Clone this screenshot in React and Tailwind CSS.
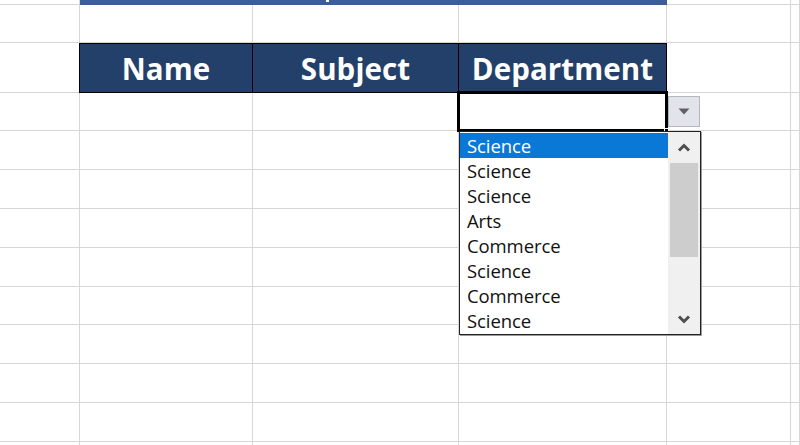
const COLS = "grid grid-cols-[80px_173px_206px_208px_124px_1fr]";
const CELL = "border-r border-b border-[#d6d6d6]";

// row heights below the header, in px
const BODY_ROWS = [38, 39, 39, 39, 39, 38, 39, 39, 39, 39];

const OPTIONS = ["Science", "Science", "Science", "Arts", "Commerce", "Science", "Commerce", "Science"];

function BlankRow({ h }) {
  return (
    <div className={COLS} style={{ height: h }}>
      {[0, 1, 2, 3, 4, 5].map((i) => (
        <div key={i} className={CELL} />
      ))}
    </div>
  );
}

function Chevron({ up }) {
  return (
    <svg width="14" height="9" viewBox="0 0 14 9">
      <polyline
        points={up ? "2,7.5 7,2.5 12,7.5" : "2,1.5 7,6.5 12,1.5"}
        fill="none"
        stroke="#4f4f4f"
        strokeWidth="3"
      />
    </svg>
  );
}

function DropDown() {
  return (
    <>
      {/* active cell */}
      <div className="absolute left-[457px] top-[91px] w-[211px] h-[41px] border-[3px] border-black bg-white" />
      <div className="absolute left-[664px] top-[128px] w-[5px] h-[5px] bg-black border border-white" />

      {/* arrow button */}
      <div className="absolute left-[668px] top-[96px] w-[32px] h-[31px] bg-[#e1e4ea] border border-[#b4b7bd] flex items-center justify-center">
        <svg width="12" height="7" viewBox="0 0 12 7">
          <polygon points="0.5,0.5 11.5,0.5 6,6.5" fill="#5f6063" />
        </svg>
      </div>

      {/* list */}
      <div className="absolute left-[459px] top-[131px] w-[242px] h-[204px] bg-white border border-[#222] flex shadow-[1px_1px_0_#9a9a9a]">
        <div className="flex-1 pt-px">
          {OPTIONS.map((o, i) => (
            <div
              key={i}
              className={
                "h-[25px] pl-[7px] pt-[2px] flex items-center text-[18.5px] leading-none tracking-[-0.1px] " +
                (i === 0 ? "bg-[#0a78d7] text-white" : "text-[#111]")
              }
            >
              {o}
            </div>
          ))}
        </div>
        <div className="w-[32px] bg-[#f0f0f0] flex flex-col items-center">
          <div className="h-[31px] flex items-center justify-center">
            <Chevron up />
          </div>
          <div className="w-[28px] h-[94px] bg-[#cdcdcd]" />
          <div className="flex-1" />
          <div className="h-[30px] flex items-center justify-center">
            <Chevron />
          </div>
        </div>
      </div>
    </>
  );
}

export default function App() {
  return (
    <div className="relative w-[800px] h-[445px] overflow-hidden bg-white font-['Open_Sans',sans-serif]">
      {/* title band, mostly scrolled off */}
      <div className={COLS + " h-[5px]"}>
        <div className={CELL} />
        <div className="col-span-3 bg-[#3b5f94] relative">
          <span className="absolute left-[246px] top-0 w-[3px] h-[2px] bg-white" />
        </div>
        <div className={CELL} />
        <div className={CELL} />
      </div>
      <BlankRow h={38} />

      {/* header */}
      <div className={COLS + " h-[50px]"}>
        <div className={CELL} />
        {["Name", "Subject", "Department"].map((t) => (
          <div
            key={t}
            className="bg-[#23406a] border border-black -ml-px first:ml-0 flex items-center justify-center pt-[3px] text-white font-bold text-[29.5px] tracking-[0.1px]"
          >
            {t}
          </div>
        ))}
        <div className={CELL} />
        <div className={CELL} />
      </div>

      {BODY_ROWS.map((h, i) => (
        <BlankRow key={i} h={h} />
      ))}
      <BlankRow h={20} />

      <DropDown />
    </div>
  );
}
